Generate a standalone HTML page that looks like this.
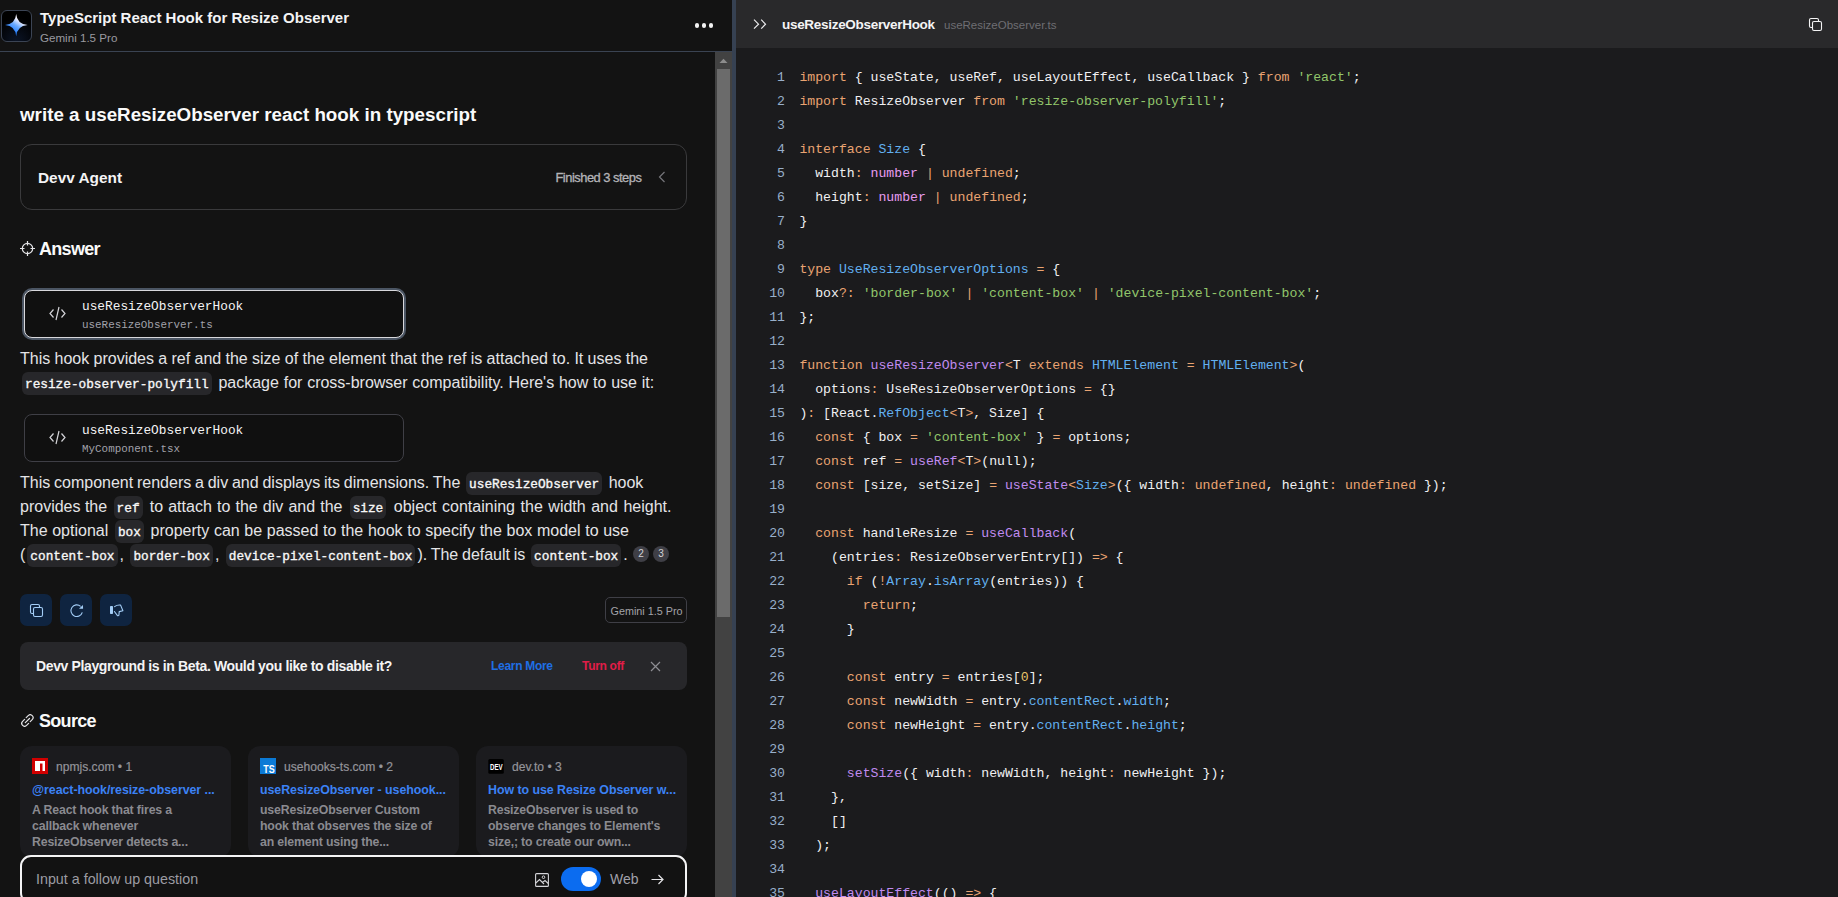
<!DOCTYPE html>
<html><head><meta charset="utf-8">
<style>
*{box-sizing:border-box}
html,body{margin:0;padding:0}
body{width:1838px;height:897px;overflow:hidden;position:relative;background:#131313;font-family:"Liberation Sans",sans-serif;color:#e4e4e7}
.a{position:absolute}
.nw{white-space:nowrap}
/* left */
#left{position:absolute;left:0;top:0;width:732px;height:897px;background:#131313;overflow:hidden}
#hdr{position:absolute;left:0;top:0;width:732px;height:52px;border-bottom:1px solid #3a4352}
#logo{position:absolute;left:0.5px;top:10px;width:31px;height:32px;border:1px solid #3b4454;border-radius:6px;background:radial-gradient(circle at 50% 100%,#0b1426 0%,#000 70%)}
#ttl{left:40px;top:8px;font-size:15px;font-weight:700;color:#f4f4f5;line-height:20px}
#sub{left:40px;top:30px;font-size:11.6px;color:#9a9aa0;line-height:16px}
.dot{position:absolute;top:23.2px;width:4.8px;height:4.8px;border-radius:50%;background:#f2f2f2}
#sb{position:absolute;left:715px;top:52px;width:17px;height:845px;background:#424242}
#thumb{position:absolute;left:2px;top:17px;width:13px;height:548px;background:#6b6b6b}
#q{left:20px;top:102px;font-size:18.8px;font-weight:700;color:#fafafa;line-height:26px}
#agent{position:absolute;left:20px;top:144px;width:667px;height:66px;border:1px solid #3a3a3c;border-radius:12px}
#agent .t{position:absolute;left:17px;top:22.5px;font-size:15.4px;font-weight:700;color:#f4f4f5;line-height:20px}
#agent .f{position:absolute;left:534.5px;top:25px;font-size:12.9px;font-weight:400;letter-spacing:-0.5px;-webkit-text-stroke:0.3px #b4b4b8;color:#b4b4b8;line-height:16px}
.h2{margin-top:1px;font-size:18px;font-weight:700;letter-spacing:-0.7px;color:#fafafa;line-height:22px}
.card{position:absolute;left:24px;width:380px;height:48px;border:1px solid #3f3f46;border-radius:8px;background:#101010}
.card.sel{border-color:#d8d8dc;box-shadow:0 0 0 2px #4b5563}
.card svg{position:absolute;left:24px;top:15.3px}
.card .n{position:absolute;left:57px;top:6.7px;font-family:"Liberation Mono",monospace;font-size:12.8px;color:#f4f4f5;line-height:18px}
.card .fn{position:absolute;left:57px;top:25.5px;font-family:"Liberation Mono",monospace;font-size:10.9px;color:#a1a1aa;line-height:16px}
.p{position:absolute;left:20px;font-size:16px;line-height:24px;color:#e4e4e7;white-space:nowrap}
.c{display:inline;line-height:0;font-family:"Liberation Mono",monospace;font-size:12.75px;font-weight:400;-webkit-text-stroke:0.35px #f8f8f8;color:#f8f8f8;background:#27272a;border-radius:6px;padding:4.8px 3px 2.9px;margin:0 2px}
.cite{display:inline-block;width:16px;height:16px;border-radius:50%;background:#3f3f46;color:#d4d4d8;font-size:10px;line-height:16px;text-align:center;vertical-align:3.2px;margin-left:1px}
.cite+.cite{margin-left:4px}
.btn{position:absolute;top:594px;width:32px;height:32px;border-radius:7px;background:#0f2440}
.btn svg{position:absolute;left:9px;top:9px}
#gem{position:absolute;left:605px;top:597px;width:82px;height:26px;border:1px solid #3f3f46;border-radius:5px;font-size:10.8px;color:#a3a3a9;line-height:26px;text-align:center;padding-left:1px}
#beta{position:absolute;left:20px;top:642px;width:667px;height:48px;border-radius:8px;background:#27272a}
#beta .t{position:absolute;left:16px;top:15.5px;font-size:14px;font-weight:700;letter-spacing:-0.37px;color:#f4f4f5;line-height:16px}
#beta .lm{position:absolute;left:471px;top:16px;font-size:12px;font-weight:700;letter-spacing:-0.3px;color:#1f6fe5;line-height:16px}
#beta .to{position:absolute;left:562px;top:16px;font-size:12px;font-weight:700;letter-spacing:-0.3px;color:#e11d48;line-height:16px}
.src{position:absolute;top:746px;width:211px;height:111px;border-radius:12px;background:#1b1b1e}
.src .fav{position:absolute;left:12px;top:12px;width:16px;height:16px}
.src .d{position:absolute;left:36px;top:13px;font-size:12.1px;color:#94949a;-webkit-text-stroke:0.2px #94949a;line-height:16px}
.src .tt{position:absolute;left:12px;top:36px;font-size:12.4px;font-weight:700;letter-spacing:-0.05px;color:#3b82f6;line-height:16px;white-space:nowrap}
.src .ds{position:absolute;left:12px;top:56px;font-size:12.3px;font-weight:700;color:#8a8a90;line-height:16px;white-space:nowrap;letter-spacing:-0.15px}
#inp{position:absolute;left:20px;top:855px;width:667px;height:49px;border:2px solid #f4f4f5;border-radius:11px;background:#121212}
#inp .ph{position:absolute;left:14px;top:11.5px;font-size:14.3px;color:#9c9ca3;line-height:20px}
#tog{position:absolute;left:539px;top:10px;width:40px;height:24px;border-radius:12px;background:#0b6cf0}
#tog:after{content:"";position:absolute;left:20px;top:4px;width:16px;height:16px;border-radius:50%;background:#fff}
#web{position:absolute;left:588px;top:12.3px;font-size:14px;color:#a1a1aa;line-height:20px}
/* divider */
#div{position:absolute;left:732px;top:0;width:4px;height:897px;background:#364152}
/* right */
#right{position:absolute;left:736px;top:0;width:1102px;height:897px;background:#1b1b1d;overflow:hidden}
#rh{position:absolute;left:0;top:0;width:1102px;height:48px;background:#29292b}
#rh .t{position:absolute;left:46px;top:16px;font-size:13.5px;font-weight:700;letter-spacing:-0.3px;color:#f4f4f5;line-height:18px}
#rh .fn{position:absolute;left:208px;top:17px;font-size:11.5px;color:#6e6e73;line-height:16px}
.ln{position:absolute;left:0;height:24px;line-height:24px;font-family:"Liberation Mono",monospace;font-size:13.18px;white-space:pre;color:#f0f0f2}
.ln b{position:absolute;left:0;width:49px;text-align:right;font-weight:400;color:#98afca}
.ln span{position:absolute;left:63.4px}
i{font-style:normal}
i.k{color:#eaa472}
i.s{color:#92c66b}
i.t{color:#62b0f0}
i.f{color:#c08bf0}
i.m{color:#e79bf0}
i.n{color:#e8c46b}
</style></head><body>
<div id="left">
  <div id="hdr">
    <div id="logo"><svg class="a" style="left:2px;top:2px" width="24" height="24" viewBox="0 0 24 24"><defs><linearGradient id="sg" x1="0.85" y1="0.05" x2="0.25" y2="0.95"><stop offset="0" stop-color="#fff"/><stop offset="0.3" stop-color="#f0f0ff"/><stop offset="0.55" stop-color="#6aaaff"/><stop offset="0.8" stop-color="#2a82ff"/><stop offset="1" stop-color="#0a6cff"/></linearGradient></defs><path d="M12.2 1 Q13 11 23.6 12 Q13 13 12.2 23.2 Q11.4 13 1 12 Q11.4 11 12.2 1Z" fill="url(#sg)"/></svg></div>
    <div id="ttl" class="a nw">TypeScript React Hook for Resize Observer</div>
    <div id="sub" class="a nw">Gemini 1.5 Pro</div>
    <div class="dot" style="left:694.5px"></div><div class="dot" style="left:701.5px"></div><div class="dot" style="left:708.5px"></div>
  </div>
  <div id="sb"><svg class="a" style="left:4px;top:6px" width="9" height="6" viewBox="0 0 9 6"><path d="M4.5 0.8 L8.5 5 L0.5 5Z" fill="#8c8c8c"/></svg><div id="thumb"></div></div>

  <div id="q" class="a nw">write a useResizeObserver react hook in typescript</div>

  <div id="agent"><div class="t nw">Devv Agent</div><div class="f nw">Finished 3 steps</div>
    <svg class="a" style="left:637px;top:26px" width="8" height="12" viewBox="0 0 8 12"><path d="M6.5 1 L1.5 6 L6.5 11" fill="none" stroke="#75757a" stroke-width="1.2"/></svg>
  </div>

  <svg class="a" style="left:20px;top:241px" width="15" height="15" viewBox="0 0 15 15"><circle cx="7.5" cy="7.5" r="5.2" fill="none" stroke="#e4e4e7" stroke-width="1.2"/><path d="M7.5 0 V4.5 M7.5 10.5 V15 M0 7.5 H4.5 M10.5 7.5 H15" stroke="#e4e4e7" stroke-width="1.2"/></svg>
  <div class="a h2 nw" style="left:39px;top:237px">Answer</div>

  <div class="card sel" style="top:290px">
    <svg width="17" height="15" viewBox="0 0 17 15"><path d="M4.5 3.5 L1 7.5 L4.5 11.5 M12.5 3.5 L16 7.5 L12.5 11.5 M10 1 L7 14" fill="none" stroke="#d4d4d8" stroke-width="1.2"/></svg>
    <div class="n nw">useResizeObserverHook</div><div class="fn nw">useResizeObserver.ts</div>
  </div>
  <div class="p" style="top:347px"><span style="word-spacing:-0.14px">This hook provides a ref and the size of the element that the ref is attached to. It uses the</span><br><span class="c" style="margin-left:2px">resize-observer-polyfill</span><span style="word-spacing:0.33px"> package for cross-browser compatibility. Here's how to use it:</span></div>

  <div class="card" style="top:414px">
    <svg width="17" height="15" viewBox="0 0 17 15"><path d="M4.5 3.5 L1 7.5 L4.5 11.5 M12.5 3.5 L16 7.5 L12.5 11.5 M10 1 L7 14" fill="none" stroke="#d4d4d8" stroke-width="1.2"/></svg>
    <div class="n nw">useResizeObserverHook</div><div class="fn nw">MyComponent.tsx</div>
  </div>
  <div class="p" style="top:471px"><span style="word-spacing:-0.65px">This component renders a div and displays its dimensions. The </span><span class="c">useResizeObserver</span> hook<br>provides the <span class="c">ref</span><span style="word-spacing:0.7px"> to attach to the div and the </span><span class="c">size</span><span style="word-spacing:1.1px"> object containing the width and height.</span><br><span style="word-spacing:0.2px">The optional <span class="c">box</span> property can be passed to the hook to specify the box model to use</span><br>(<span class="c">content-box</span>, <span class="c">border-box</span>, <span class="c">device-pixel-content-box</span><span style="word-spacing:-0.7px">). The default is </span><span class="c">content-box</span>. <span class="cite">2</span><span class="cite">3</span></div>

  <div class="btn" style="left:20px"><svg width="15" height="15" viewBox="0 0 15 15"><rect x="1.5" y="1.5" width="9" height="9" rx="1.5" fill="none" stroke="#a3cdf6" stroke-width="1.1"/><rect x="4.5" y="4.5" width="9" height="9" rx="1.5" fill="#0f2440" stroke="#a3cdf6" stroke-width="1.1"/></svg></div>
  <div class="btn" style="left:60px"><svg width="15" height="15" viewBox="0 0 15 15"><path d="M13.3 9.3 A5.8 5.8 0 1 1 11.6 3.3" fill="none" stroke="#a3cdf6" stroke-width="1.1"/><path d="M10 5.7 L14.1 5.7 L13.9 1.9Z" fill="#a3cdf6"/></svg></div>
  <div class="btn" style="left:100px"><svg width="15" height="15" viewBox="0 0 15 15"><rect x="1" y="3" width="3" height="8" rx="0.7" fill="#a3cdf6"/><path d="M5.6 3.6 Q8 1.7 11.6 2.1 L13.9 7.7 L10.2 8.6 L9.9 12.2 Q9 13.2 8.3 12.3 L5.4 8.5" fill="none" stroke="#a3cdf6" stroke-width="1.1" stroke-linejoin="round" stroke-linecap="round"/></svg></div>
  <div id="gem" class="nw">Gemini 1.5 Pro</div>

  <div id="beta"><div class="t nw">Devv Playground is in Beta. Would you like to disable it?</div><div class="lm nw">Learn More</div><div class="to nw">Turn off</div>
    <svg class="a" style="left:630px;top:19px" width="11" height="11" viewBox="0 0 11 11"><path d="M1 1 L10 10 M10 1 L1 10" stroke="#8e8e93" stroke-width="1.2"/></svg>
  </div>

  <svg class="a" style="left:21px;top:714px" width="13" height="13" viewBox="0 0 13 13"><path d="M5.2 3.6 L7.2 1.6 A2.6 2.6 0 0 1 11.2 5.6 L9.2 7.6 M7.6 9.4 L5.6 11.4 A2.6 2.6 0 0 1 1.6 7.4 L3.6 5.4 M4.3 8.7 L8.5 4.5" fill="none" stroke="#e4e4e7" stroke-width="1.2" stroke-linecap="round"/></svg>
  <div class="a h2 nw" style="left:39px;top:709px">Source</div>

  <div class="src" style="left:20px">
    <svg class="fav" viewBox="0 0 16 16"><rect width="16" height="16" fill="#d00000"/><path d="M3 3 H13 V13 H10.5 V5.5 H8 V13 H3Z" fill="#fff"/></svg>
    <div class="d nw">npmjs.com • 1</div>
    <div class="tt">@react-hook/resize-observer ...</div>
    <div class="ds">A React hook that fires a<br>callback whenever<br>ResizeObserver detects a...</div>
  </div>
  <div class="src" style="left:248px">
    <svg class="fav" viewBox="0 0 16 16"><rect width="16" height="16" fill="#0b7ad6"/><text x="3.2" y="14.6" font-family="Liberation Sans" font-weight="700" font-size="10.6" textLength="11.5" lengthAdjust="spacingAndGlyphs" fill="#fff">TS</text></svg>
    <div class="d nw">usehooks-ts.com • 2</div>
    <div class="tt">useResizeObserver - usehook...</div>
    <div class="ds">useResizeObserver Custom<br>hook that observes the size of<br>an element using the...</div>
  </div>
  <div class="src" style="left:476px">
    <svg class="fav" viewBox="0 0 16 16"><rect x="0.3" y="1" width="15.5" height="14.7" rx="1.5" fill="#000"/><text x="2" y="11.6" font-family="Liberation Sans" font-weight="700" font-size="9.2" textLength="12.7" lengthAdjust="spacingAndGlyphs" fill="#fff">DEV</text></svg>
    <div class="d nw">dev.to • 3</div>
    <div class="tt">How to use Resize Observer w...</div>
    <div class="ds">ResizeObserver is used to<br>observe changes to Element's<br>size,; to create our own...</div>
  </div>

  <div id="inp"><div class="ph nw">Input a follow up question</div>
    <svg class="a" style="left:513px;top:16px" width="14" height="14" viewBox="0 0 14 14"><rect x="0.6" y="0.6" width="12.8" height="12.8" rx="1" fill="none" stroke="#d4d4d8" stroke-width="1.1"/><circle cx="8.5" cy="4.2" r="1.3" fill="none" stroke="#d4d4d8" stroke-width="1"/><path d="M0.8 10 L4.5 6.5 L9 11 M7.5 9.5 L10 7.5 L13.3 10.5" fill="none" stroke="#d4d4d8" stroke-width="1.1"/></svg>
    <div id="tog"></div>
    <div id="web" class="nw">Web</div>
    <svg class="a" style="left:629px;top:17px" width="13" height="11" viewBox="0 0 13 11"><path d="M0.5 5.5 H12 M7.5 1 L12 5.5 L7.5 10" fill="none" stroke="#e4e4e7" stroke-width="1.2"/></svg>
  </div>
</div>
<div id="div"></div>
<div id="right">
  <div id="rh">
    <svg class="a" style="left:17px;top:19px" width="14" height="11" viewBox="0 0 14 11"><path d="M1 0.7 L5.5 5.2 L1 9.7 M8.2 0.7 L12.5 5.2 L8.2 9.7" fill="none" stroke="#ececee" stroke-width="1.2"/></svg>
    <div class="t nw">useResizeObserverHook</div>
    <div class="fn nw">useResizeObserver.ts</div>
    <svg class="a" style="left:1072px;top:17px" width="15" height="15" viewBox="0 0 15 15"><rect x="1.5" y="1.5" width="9" height="9" rx="1.5" fill="none" stroke="#f4f4f5" stroke-width="1.1"/><rect x="4.5" y="4.5" width="9" height="9" rx="1.5" fill="#29292b" stroke="#f4f4f5" stroke-width="1.1"/></svg>
  </div>
<div class="ln" style="top:65.5px"><b>1</b><span><i class="k">import</i> { useState, useRef, useLayoutEffect, useCallback } <i class="k">from</i> <i class="s">&#x27;react&#x27;</i>;</span></div>
<div class="ln" style="top:89.5px"><b>2</b><span><i class="k">import</i> ResizeObserver <i class="k">from</i> <i class="s">&#x27;resize-observer-polyfill&#x27;</i>;</span></div>
<div class="ln" style="top:113.5px"><b>3</b><span></span></div>
<div class="ln" style="top:137.5px"><b>4</b><span><i class="k">interface</i> <i class="t">Size</i> {</span></div>
<div class="ln" style="top:161.5px"><b>5</b><span>  width<i class="k">:</i> <i class="m">number</i> <i class="k">|</i> <i class="k">undefined</i>;</span></div>
<div class="ln" style="top:185.5px"><b>6</b><span>  height<i class="k">:</i> <i class="m">number</i> <i class="k">|</i> <i class="k">undefined</i>;</span></div>
<div class="ln" style="top:209.5px"><b>7</b><span>}</span></div>
<div class="ln" style="top:233.5px"><b>8</b><span></span></div>
<div class="ln" style="top:257.5px"><b>9</b><span><i class="k">type</i> <i class="t">UseResizeObserverOptions</i> <i class="k">=</i> {</span></div>
<div class="ln" style="top:281.5px"><b>10</b><span>  box<i class="k">?:</i> <i class="s">&#x27;border-box&#x27;</i> <i class="k">|</i> <i class="s">&#x27;content-box&#x27;</i> <i class="k">|</i> <i class="s">&#x27;device-pixel-content-box&#x27;</i>;</span></div>
<div class="ln" style="top:305.5px"><b>11</b><span>};</span></div>
<div class="ln" style="top:329.5px"><b>12</b><span></span></div>
<div class="ln" style="top:353.5px"><b>13</b><span><i class="k">function</i> <i class="f">useResizeObserver</i><i class="k">&lt;</i>T <i class="k">extends</i> <i class="t">HTMLElement</i> <i class="k">=</i> <i class="t">HTMLElement</i><i class="k">&gt;</i>(</span></div>
<div class="ln" style="top:377.5px"><b>14</b><span>  options<i class="k">:</i> UseResizeObserverOptions <i class="k">=</i> {}</span></div>
<div class="ln" style="top:401.5px"><b>15</b><span>)<i class="k">:</i> [React.<i class="t">RefObject</i><i class="k">&lt;</i>T<i class="k">&gt;</i>, Size] {</span></div>
<div class="ln" style="top:425.5px"><b>16</b><span>  <i class="k">const</i> { box <i class="k">=</i> <i class="s">&#x27;content-box&#x27;</i> } <i class="k">=</i> options;</span></div>
<div class="ln" style="top:449.5px"><b>17</b><span>  <i class="k">const</i> ref <i class="k">=</i> <i class="f">useRef</i><i class="k">&lt;</i>T<i class="k">&gt;</i>(null);</span></div>
<div class="ln" style="top:473.5px"><b>18</b><span>  <i class="k">const</i> [size, setSize] <i class="k">=</i> <i class="f">useState</i><i class="k">&lt;</i><i class="t">Size</i><i class="k">&gt;</i>({ width<i class="k">:</i> <i class="k">undefined</i>, height<i class="k">:</i> <i class="k">undefined</i> });</span></div>
<div class="ln" style="top:497.5px"><b>19</b><span></span></div>
<div class="ln" style="top:521.5px"><b>20</b><span>  <i class="k">const</i> handleResize <i class="k">=</i> <i class="f">useCallback</i>(</span></div>
<div class="ln" style="top:545.5px"><b>21</b><span>    (entries<i class="k">:</i> ResizeObserverEntry[]) <i class="k">=&gt;</i> {</span></div>
<div class="ln" style="top:569.5px"><b>22</b><span>      <i class="k">if</i> (<i class="k">!</i><i class="t">Array</i>.<i class="t">isArray</i>(entries)) {</span></div>
<div class="ln" style="top:593.5px"><b>23</b><span>        <i class="k">return</i>;</span></div>
<div class="ln" style="top:617.5px"><b>24</b><span>      }</span></div>
<div class="ln" style="top:641.5px"><b>25</b><span></span></div>
<div class="ln" style="top:665.5px"><b>26</b><span>      <i class="k">const</i> entry <i class="k">=</i> entries[<i class="n">0</i>];</span></div>
<div class="ln" style="top:689.5px"><b>27</b><span>      <i class="k">const</i> newWidth <i class="k">=</i> entry.<i class="t">contentRect</i>.<i class="t">width</i>;</span></div>
<div class="ln" style="top:713.5px"><b>28</b><span>      <i class="k">const</i> newHeight <i class="k">=</i> entry.<i class="t">contentRect</i>.<i class="t">height</i>;</span></div>
<div class="ln" style="top:737.5px"><b>29</b><span></span></div>
<div class="ln" style="top:761.5px"><b>30</b><span>      <i class="f">setSize</i>({ width<i class="k">:</i> newWidth, height<i class="k">:</i> newHeight });</span></div>
<div class="ln" style="top:785.5px"><b>31</b><span>    },</span></div>
<div class="ln" style="top:809.5px"><b>32</b><span>    []</span></div>
<div class="ln" style="top:833.5px"><b>33</b><span>  );</span></div>
<div class="ln" style="top:857.5px"><b>34</b><span></span></div>
<div class="ln" style="top:881.5px"><b>35</b><span>  <i class="f">useLayoutEffect</i>(() <i class="k">=&gt;</i> {</span></div>
</div>
</body></html>
